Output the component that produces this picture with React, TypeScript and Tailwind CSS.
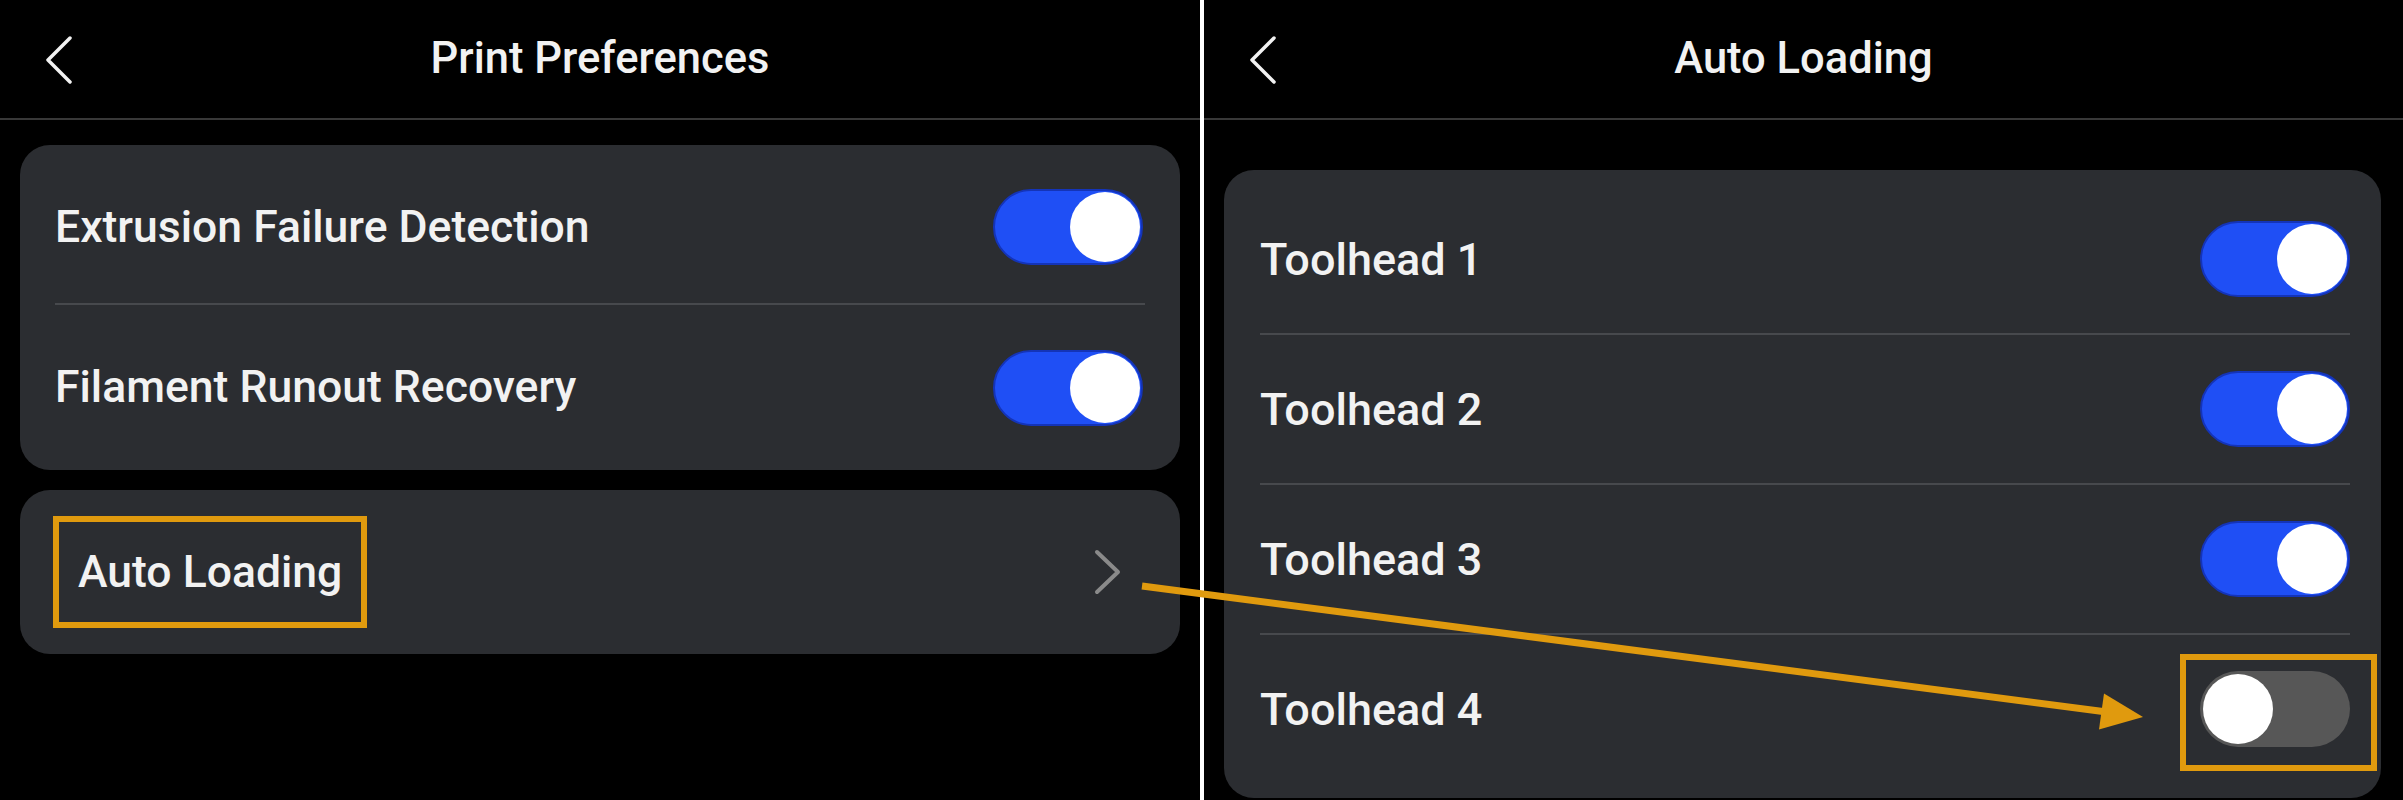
import React from "react";

const font = { fontFamily: "Roboto, 'Noto Sans', sans-serif" };

function Toggle({ on }: { on: boolean }) {
  return on ? (
    <div className="w-[150px] h-[76px] rounded-full bg-[#1f4ff5] border-2 border-[#1434b8] flex items-center justify-end pr-[1px] shrink-0">
      <div className="w-[70px] h-[70px] rounded-full bg-white" />
    </div>
  ) : (
    <div className="w-[150px] h-[76px] rounded-full bg-[#575757] flex items-center justify-start pl-[3px] shrink-0">
      <div className="w-[70px] h-[70px] rounded-full bg-white" />
    </div>
  );
}

function BackChevron() {
  return (
    <svg width="30" height="50" viewBox="0 0 30 50" className="block">
      <polyline
        points="24,4 2,26 24,48"
        fill="none"
        stroke="#f2f2f2"
        strokeWidth="3.5"
        strokeLinecap="round"
        strokeLinejoin="round"
      />
    </svg>
  );
}

function Header({ title }: { title: string }) {
  return (
    <div className="h-[120px] border-b-2 border-[#383838] grid grid-cols-3 items-center">
      <div className="pl-[46px] flex items-center">
        <BackChevron />
      </div>
      <div className="text-center text-[43.5px] font-medium text-[#f2f2f2] whitespace-nowrap leading-none">
        {title}
      </div>
      <div />
    </div>
  );
}

function Sep({ ml, mr }: { ml: string; mr: string }) {
  return <div className={`h-[2px] bg-[#47494d] ${ml} ${mr}`} />;
}

export default function App() {
  const toolheads = [
    { name: "Toolhead 1", on: true },
    { name: "Toolhead 2", on: true },
    { name: "Toolhead 3", on: true },
    { name: "Toolhead 4", on: false },
  ];
  return (
    <div
      className="relative w-[2403px] h-[800px] bg-black flex overflow-hidden text-[#f2f2f2]"
      style={font}
    >
      {/* Left panel */}
      <div className="w-[1200px] shrink-0 flex flex-col">
        <Header title="Print Preferences" />
        <div className="px-[20px] pt-[25px] flex flex-col gap-[20px]">
          <div className="rounded-[30px] bg-[#2b2d31] pt-[6px]">
            <div className="h-[152px] flex items-center justify-between pl-[35px] pr-[37px]">
              <span className="text-[44.5px] font-medium leading-none">Extrusion Failure Detection</span>
              <Toggle on />
            </div>
            <Sep ml="ml-[35px]" mr="mr-[35px]" />
            <div className="h-[165px] flex items-center justify-between pl-[35px] pr-[37px]">
              <span className="text-[44.5px] font-medium leading-none">Filament Runout Recovery</span>
              <Toggle on />
            </div>
          </div>
          <div className="rounded-[30px] bg-[#2b2d31] h-[164px] flex items-center justify-between pl-[33px] pr-[58px]">
            <div className="w-[314px] h-[112px] border-[6px] border-[#e09a0e] flex items-center pl-[19px]">
              <span className="text-[44.5px] font-medium leading-none whitespace-nowrap">Auto Loading</span>
            </div>
            <svg width="28" height="48" viewBox="0 0 28 48" className="block">
              <polyline
                points="3,4 24,24 3,44"
                fill="none"
                stroke="#8a8a8a"
                strokeWidth="4"
                strokeLinecap="round"
                strokeLinejoin="round"
              />
            </svg>
          </div>
        </div>
      </div>

      {/* Divider */}
      <div className="w-[4px] shrink-0 bg-white" />

      {/* Right panel */}
      <div className="flex-1 flex flex-col">
        <Header title="Auto Loading" />
        <div className="pl-[20px] pr-[22px] pt-[50px]">
          <div className="rounded-[30px] bg-[#2b2d31] pt-[15px] pb-[15px]">
            {toolheads.map((t, i) => (
              <React.Fragment key={t.name}>
                {i > 0 && <Sep ml="ml-[36px]" mr="mr-[31px]" />}
                <div className="h-[148px] flex items-center justify-between pl-[36px] pr-[31px]">
                  <span className="text-[45px] font-medium leading-none">{t.name}</span>
                  <div className="relative">
                    <Toggle on={t.on} />
                    {!t.on && (
                      <div className="absolute left-[-20px] top-[-17px] w-[197px] h-[117px] border-[6px] border-[#e09a0e]" />
                    )}
                  </div>
                </div>
              </React.Fragment>
            ))}
          </div>
        </div>
      </div>

      {/* Annotation arrow */}
      <svg
        className="absolute inset-0 pointer-events-none"
        width="2403"
        height="800"
        viewBox="0 0 2403 800"
      >
        <line x1="1142" y1="586" x2="2103" y2="711.5" stroke="#e09a0e" strokeWidth="7" />
        <polygon points="2143,717 2099,729.5 2104,693.5" fill="#e09a0e" />
      </svg>
    </div>
  );
}
